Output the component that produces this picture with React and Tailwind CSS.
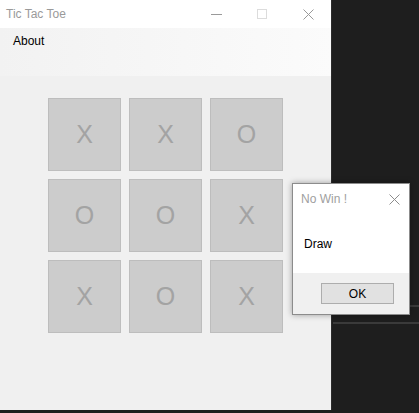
import React from 'react';

const board = ['X', 'X', 'O', 'O', 'O', 'X', 'X', 'O', 'X'];

function CloseGlyph({ color = '#8c8c8c' }) {
  return (
    <svg width="11" height="11" viewBox="0 0 11 11">
      <path d="M0.5 0.5 L10.5 10.5 M10.5 0.5 L0.5 10.5" stroke={color} strokeWidth="1" fill="none" />
    </svg>
  );
}

export default function App() {
  return (
    <div
      className="relative w-[419px] h-[413px] bg-[#1e1e1e] overflow-hidden flex items-start"
      style={{ fontFamily: '"Liberation Sans", Arial, sans-serif' }}
    >
      {/* Main window */}
      <div className="w-[332px] h-[410px] flex flex-col border-r border-[#2c2c2c] shrink-0">
        {/* Title bar */}
        <div className="h-[28px] bg-white flex items-center">
          <span className="flex-1 pl-[6px] text-[12px] text-[#9a9a9a]">Tic Tac Toe</span>
          <div className="w-[46px] h-full flex items-center justify-center">
            <div className="w-[11px] h-px bg-[#9a9a9a]" />
          </div>
          <div className="w-[46px] h-full flex items-center justify-center">
            <div className="w-[10px] h-[10px] border border-[#dcdcdc]" />
          </div>
          <div className="w-[46px] h-full flex items-center justify-center">
            <CloseGlyph color="#999999" />
          </div>
        </div>

        {/* Menu strip */}
        <div className="h-[48px] bg-gradient-to-r from-[#f2f2f2] to-[#fbfbfb] px-[13px] pt-0">
          <span className="text-[12px] text-black">About</span>
        </div>

        {/* Board */}
        <div className="flex-1 bg-[#f0f0f0] pl-[48px] pt-[22px]">
          <div className="grid grid-cols-[73px_73px_73px] gap-[8px]">
            {board.map((v, i) => (
              <div
                key={i}
                className="h-[73px] bg-[#cccccc] border border-[#bdbdbd] flex items-center justify-center text-[25px] text-[#a3a3a3]"
              >
                {v}
              </div>
            ))}
          </div>
        </div>
      </div>

      {/* Desktop lines behind the dialog */}
      <div className="absolute left-[333px] right-0 top-[305px] h-[2px] bg-[#3a3a3a]" />
      <div className="absolute left-[333px] right-0 top-[322px] h-[2px] bg-[#3a3a3a]" />

      {/* Message box */}
      <div className="absolute left-[292px] top-[183px] w-[118px] h-[132px] border border-[#8c8c8c] bg-white flex flex-col shadow-[0_0_6px_rgba(0,0,0,0.35)]">
        <div className="h-[30px] flex items-center justify-between pl-[8px] pr-[9px]">
          <span className="text-[12px] text-[#a0a0a0]">No Win !</span>
          <CloseGlyph color="#8c8c8c" />
        </div>
        <div className="h-[59px] pl-[11px] pt-[17px]">
          <span className="text-[12px] text-black">Draw</span>
        </div>
        <div className="flex-1 bg-[#f0f0f0] pl-[28px] pt-[10px]">
          <button className="w-[73px] h-[21px] bg-[#e1e1e1] border border-[#adadad] text-[12px] text-black flex items-center justify-center">
            OK
          </button>
        </div>
      </div>
    </div>
  );
}
